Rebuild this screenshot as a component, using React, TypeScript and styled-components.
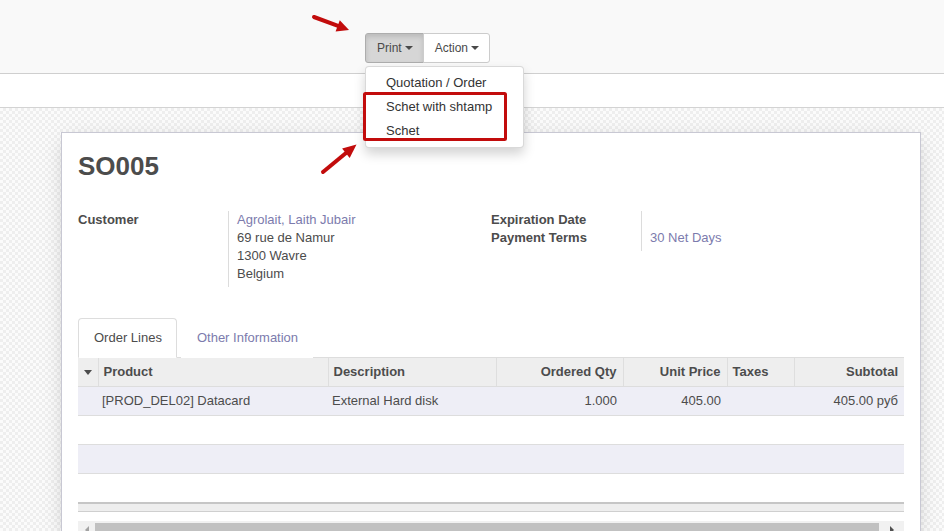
import React from "react";
import styled, { createGlobalStyle } from "styled-components";

const GlobalStyle = createGlobalStyle`
  html, body { margin: 0; padding: 0; width: 944px; height: 531px; overflow: hidden; }
  body {
    font-family: "Liberation Sans", Arial, Helvetica, sans-serif;
    font-size: 13px;
    color: #4c4c4c;
  }
  *, *::before, *::after { box-sizing: border-box; }
`;

const Page = styled.div`
  position: relative;
  display: flex;
  flex-direction: column;
  width: 944px;
  height: 531px;
  overflow: hidden;
`;

const ControlPanel = styled.div`
  flex: none;
  height: 74px;
  background: #f9f9f9;
  border-bottom: 1px solid #cfcfcf;
  display: grid;
  grid-template-columns: 365px auto 1fr;
  align-items: start;
  padding-top: 33px;
`;

const BtnGroup = styled.div`
  position: relative;
  display: flex;
`;

const Btn = styled.div<{ $active?: boolean }>`
  display: flex;
  align-items: center;
  height: 30px;
  padding: 0 10px 0 11px;
  font-size: 12px;
  line-height: 18px;
  color: #4a4a4a;
  border: 1px solid ${(p) => (p.$active ? "#adadad" : "#cccccc")};
  background: ${(p) => (p.$active ? "#d6d6d6" : "#ffffff")};
  box-shadow: ${(p) => (p.$active ? "inset 0 3px 5px rgba(0,0,0,0.125)" : "none")};
  border-radius: ${(p) => (p.$active ? "3px 0 0 3px" : "0 3px 3px 0")};
  margin-left: ${(p) => (p.$active ? "0" : "-1px")};
`;

const Caret = styled.span`
  display: inline-block;
  width: 0;
  height: 0;
  margin-left: 3px;
  border-top: 4px solid #4a4a4a;
  border-left: 4px solid transparent;
  border-right: 4px solid transparent;
`;

const Menu = styled.div`
  position: absolute;
  top: 33px;
  left: 0;
  width: 159px;
  padding: 4px 0;
  background: #fff;
  border: 1px solid rgba(0, 0, 0, 0.15);
  border-radius: 4px;
  box-shadow: 0 6px 12px rgba(0, 0, 0, 0.175);
  z-index: 5;
`;

const MenuItem = styled.div`
  padding: 3px 20px;
  line-height: 18px;
  font-size: 13px;
  color: #333;
  white-space: nowrap;
`;

const StatusBar = styled.div`
  flex: none;
  height: 34px;
  background: #fff;
  border-bottom: 1px solid #d3d3d3;
`;

const SheetBg = styled.div`
  flex: 1;
  min-height: 0;
  overflow: hidden;
  padding: 24px 23px 0 61px;
  background-color: #f7f7f7;
  background-image: repeating-conic-gradient(#eeeeee 0% 25%, #fbfbfb 0% 50%);
  background-size: 6px 6px;
`;

const Sheet = styled.div`
  width: 860px;
  background: #fff;
  border: 1px solid #c8c8d3;
  box-shadow: 0 5px 20px -6px rgba(0, 0, 0, 0.25);
  padding: 18px 16px 0 16px;
`;

const Title = styled.h1`
  margin: 0;
  font-size: 26px;
  line-height: 30px;
  font-weight: bold;
  color: #4c4c4c;
`;

const Groups = styled.div`
  margin-top: 30px;
  display: grid;
  grid-template-columns: 413px 413px;
`;

const Group = styled.div`
  display: grid;
  grid-template-columns: 150px 1fr;
  align-content: start;
`;

const Label = styled.div`
  font-weight: bold;
  line-height: 18px;
`;

const Value = styled.div<{ $last?: boolean }>`
  border-left: 1px solid #dcdcdc;
  padding: 0 0 ${(p) => (p.$last ? "4px" : "0")} 8px;
  line-height: 18px;
  min-height: 18px;
`;

const Link = styled.div`
  color: #7c7bad;
`;

const TabList = styled.div`
  margin-top: 31px;
  display: flex;
  border-bottom: 1px solid #dddddd;
`;

const Tab = styled.div<{ $active?: boolean }>`
  padding: 10px 14px 10px 15px;
  line-height: 18px;
  margin-right: 4px;
  margin-bottom: -1px;
  border: 1px solid ${(p) => (p.$active ? "#dddddd" : "transparent")};
  border-bottom-color: transparent;
  border-radius: 4px 4px 0 0;
  background: #fff;
  color: ${(p) => (p.$active ? "#4c4c4c" : "#7c7bad")};
`;

const Table = styled.table`
  width: 826px;
  border-collapse: collapse;
  table-layout: fixed;
`;

const Th = styled.th<{ $right?: boolean }>`
  height: 28px;
  padding: 0 6px 0 5px;
  background: #eeeeee;
  font-weight: bold;
  text-align: ${(p) => (p.$right ? "right" : "left")};
  border-left: 1px solid #dedede;
  border-bottom: 1px solid #dddddd;
  white-space: nowrap;
  &:first-child { border-left: none; padding: 0; text-align: center; }
`;

const SortCaret = styled.span`
  display: inline-block;
  width: 0;
  height: 0;
  border-top: 5px solid #4c4c4c;
  border-left: 4px solid transparent;
  border-right: 4px solid transparent;
  vertical-align: middle;
`;

const Tr = styled.tr<{ $odd?: boolean }>`
  background: ${(p) => (p.$odd ? "#eeeef6" : "#ffffff")};
`;

const Td = styled.td<{ $right?: boolean }>`
  height: 29px;
  padding: 0 6px 0 4px;
  text-align: ${(p) => (p.$right ? "right" : "left")};
  border-bottom: 1px solid #dddddd;
  white-space: nowrap;
`;

const TableFoot = styled.div`
  width: 826px;
  height: 10px;
  border-top: 2px solid #c6c6c6;
  border-bottom: 1px solid #cfcfcf;
  background: #eeeeee;
`;

const ScrollBar = styled.div`
  margin-top: 9px;
  width: 826px;
  height: 17px;
  background: #f1f1f1;
  display: grid;
  grid-template-columns: 17px 1fr 25px;
  align-items: stretch;
`;

const ScrollArrow = styled.div<{ $dir: "left" | "right" }>`
  display: flex;
  align-items: center;
  justify-content: center;
  &::after {
    content: "";
    width: 0;
    height: 0;
    border-top: 4px solid transparent;
    border-bottom: 4px solid transparent;
    ${(p) =>
      p.$dir === "left"
        ? "border-right: 4px solid #a3a3a3;"
        : "border-left: 4px solid #505050;"}
  }
`;

const Thumb = styled.div`
  background: #c1c1c1;
  margin: 2px 0;
`;

const Annotations = styled.svg`
  position: absolute;
  left: 0;
  top: 0;
  width: 944px;
  height: 531px;
  pointer-events: none;
  z-index: 10;
`;

const RED = "#c20c0c";

export default function App() {
  return (
    <>
      <GlobalStyle />
      <Page>
        <ControlPanel>
          <div />
          <BtnGroup>
            <Btn $active>
              Print <Caret />
            </Btn>
            <Btn>
              Action <Caret />
            </Btn>
            <Menu>
              <MenuItem>Quotation / Order</MenuItem>
              <MenuItem>Schet with shtamp</MenuItem>
              <MenuItem>Schet</MenuItem>
            </Menu>
          </BtnGroup>
        </ControlPanel>
        <StatusBar />
        <SheetBg>
          <Sheet>
            <Title>SO005</Title>
            <Groups>
              <Group>
                <Label>Customer</Label>
                <Value $last>
                  <Link>Agrolait, Laith Jubair</Link>
                  <div>69 rue de Namur</div>
                  <div>1300 Wavre</div>
                  <div>Belgium</div>
                </Value>
              </Group>
              <Group>
                <Label>Expiration Date</Label>
                <Value />
                <Label>Payment Terms</Label>
                <Value $last>
                  <Link>30 Net Days</Link>
                </Value>
              </Group>
            </Groups>
            <TabList>
              <Tab $active>Order Lines</Tab>
              <Tab>Other Information</Tab>
            </TabList>
            <Table>
              <colgroup>
                <col style={{ width: 20 }} />
                <col style={{ width: 230 }} />
                <col style={{ width: 168 }} />
                <col style={{ width: 127 }} />
                <col style={{ width: 104 }} />
                <col style={{ width: 67 }} />
                <col style={{ width: 110 }} />
              </colgroup>
              <thead>
                <tr>
                  <Th>
                    <SortCaret />
                  </Th>
                  <Th>Product</Th>
                  <Th>Description</Th>
                  <Th $right>Ordered Qty</Th>
                  <Th $right>Unit Price</Th>
                  <Th>Taxes</Th>
                  <Th $right>Subtotal</Th>
                </tr>
              </thead>
              <tbody>
                <Tr $odd>
                  <Td />
                  <Td>[PROD_DEL02] Datacard</Td>
                  <Td>External Hard disk</Td>
                  <Td $right>1.000</Td>
                  <Td $right>405.00</Td>
                  <Td />
                  <Td $right>405.00 руб</Td>
                </Tr>
                <Tr>
                  <Td colSpan={7} />
                </Tr>
                <Tr $odd>
                  <Td colSpan={7} />
                </Tr>
                <Tr>
                  <Td colSpan={7} style={{ borderBottom: "none" }} />
                </Tr>
              </tbody>
            </Table>
            <TableFoot />
            <ScrollBar>
              <ScrollArrow $dir="left" />
              <Thumb />
              <ScrollArrow $dir="right" />
            </ScrollBar>
          </Sheet>
        </SheetBg>
        <Annotations viewBox="0 0 944 531">
          <line x1="314" y1="17" x2="338" y2="25.8" stroke={RED} strokeWidth="4" strokeLinecap="round" />
          <polygon points="349,30 335.6,31.4 339.8,20.2" fill={RED} />
          <line x1="323" y1="172" x2="346" y2="153" stroke={RED} strokeWidth="4" strokeLinecap="round" />
          <polygon points="356.5,144.5 349.7,157.9 342.1,148.6" fill={RED} />
          <rect x="364.5" y="93.5" width="141" height="46" fill="none" stroke={RED} strokeWidth="3" rx="1" />
        </Annotations>
      </Page>
    </>
  );
}
